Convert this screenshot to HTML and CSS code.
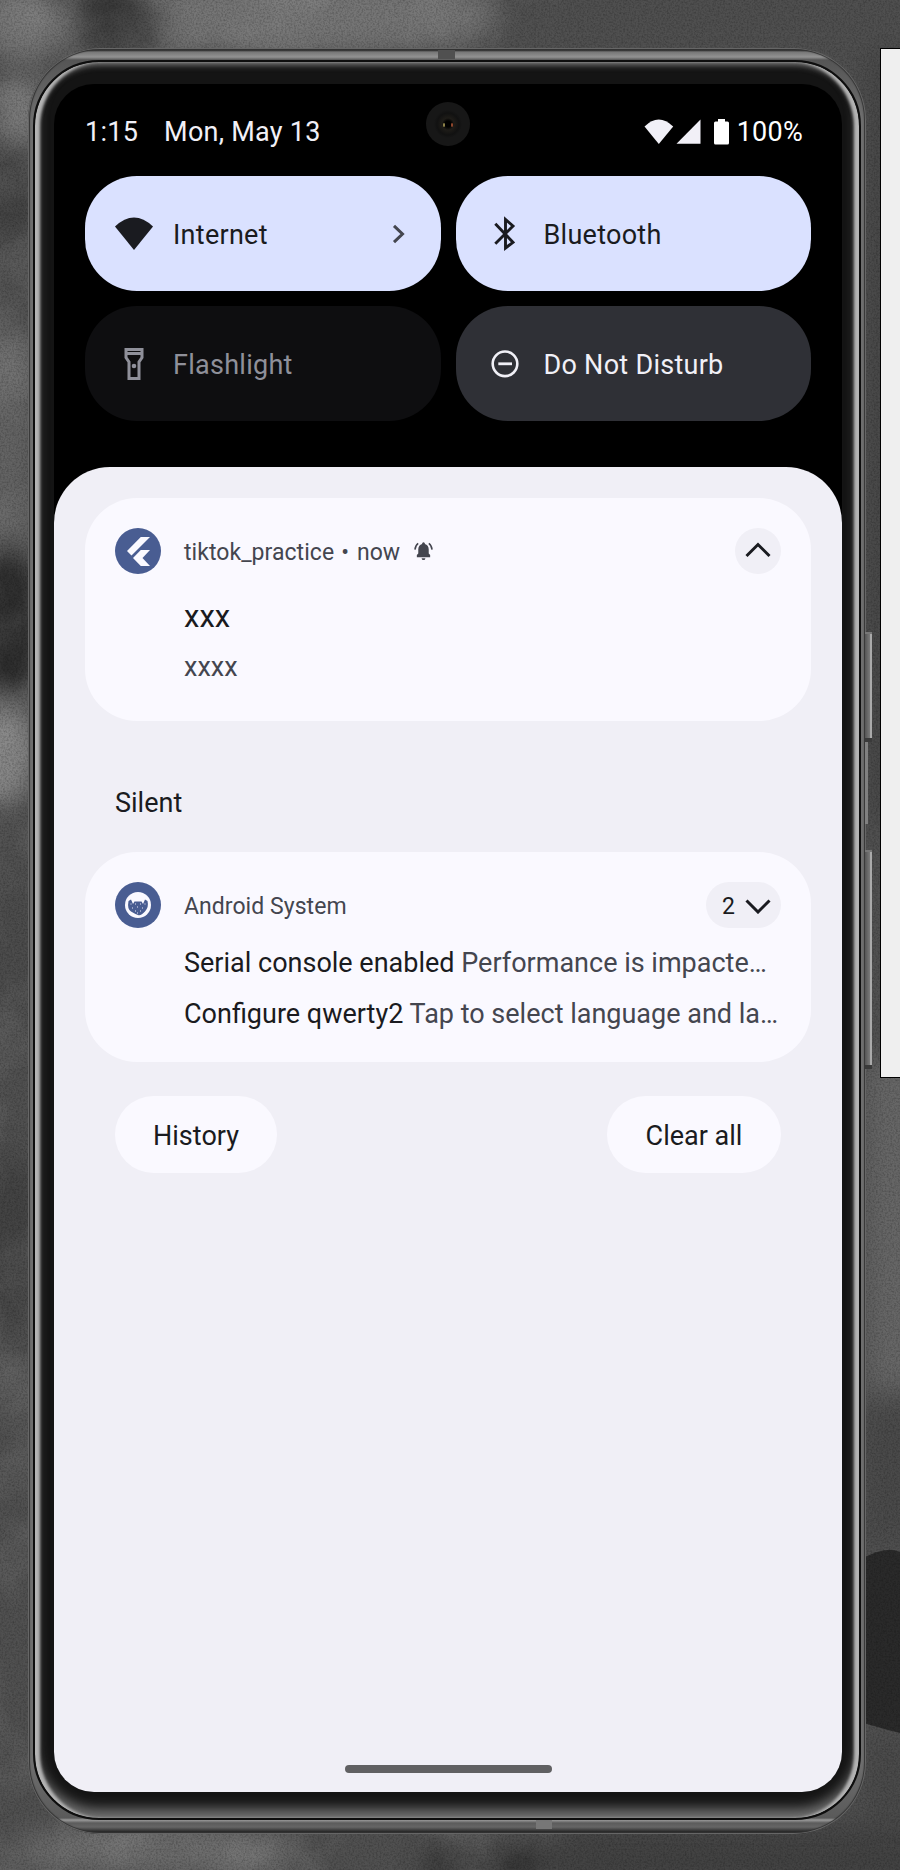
FILE: index.html
```html
<!DOCTYPE html>
<html lang="en">
<head>
<meta charset="utf-8">
<title>Notification shade</title>
<link rel="stylesheet" href="styles.css">
</head>
<body>
<div class="desktop">
  <svg class="wallpaper" viewBox="0 0 900 1870" aria-hidden="true">
    <defs>
      <filter id="soft" x="-50%" y="-50%" width="200%" height="200%"><feGaussianBlur stdDeviation="13"/></filter>
      <filter id="cloud" x="0" y="0" width="100%" height="100%"><feTurbulence type="fractalNoise" baseFrequency="0.012" numOctaves="5" seed="8"/><feColorMatrix values="0 0 0 0 0.55  0 0 0 0 0.55  0 0 0 0 0.55  1.6 0 0 0 -0.65"/></filter>
      <filter id="grain" x="0" y="0" width="100%" height="100%"><feTurbulence type="fractalNoise" baseFrequency="0.55" numOctaves="2" seed="3"/><feColorMatrix values="0 0 0 0 0  0 0 0 0 0  0 0 0 0 0  0.9 0 0 0 -0.35"/></filter>
    </defs>
    <rect width="900" height="1870" fill="#505050"/>
    <g filter="url(#soft)">
      <ellipse cx="300" cy="15" rx="200" ry="40" fill="#747474"/>
      <ellipse cx="120" cy="28" rx="45" ry="40" fill="#363636"/>
      <ellipse cx="20" cy="20" rx="40" ry="40" fill="#727272"/>
      <ellipse cx="20" cy="110" rx="30" ry="34" fill="#767676"/>
      <ellipse cx="10" cy="195" rx="28" ry="40" fill="#404040"/>
      <ellipse cx="5" cy="430" rx="30" ry="120" fill="#646464"/>
      <ellipse cx="5" cy="625" rx="34" ry="75" fill="#2c2c2c"/>
      <ellipse cx="0" cy="755" rx="34" ry="50" fill="#858585"/>
      <ellipse cx="10" cy="960" rx="30" ry="90" fill="#4c4c4c"/>
      <ellipse cx="10" cy="1240" rx="30" ry="90" fill="#424242"/>
      <ellipse cx="150" cy="1850" rx="140" ry="28" fill="#6a6a6a"/>
      <ellipse cx="490" cy="1865" rx="70" ry="22" fill="#353535"/>
      <rect x="560" y="1825" width="380" height="70" fill="#424242"/>
      <rect x="560" y="-30" width="380" height="90" fill="#4f4f4f"/>
      <rect x="865" y="50" width="60" height="770" fill="#464646"/>
      <rect x="865" y="1060" width="60" height="330" fill="#666"/>
      <rect x="865" y="1410" width="60" height="130" fill="#4a4a4a"/>
      <rect x="865" y="1740" width="60" height="80" fill="#484848"/>
    </g>
    <path d="M860 1560Q885 1545 900 1552V1733L888 1730L860 1722Z" fill="#2a2a2a"/>
    <rect width="560" height="1870" filter="url(#cloud)" opacity=".25"/>
    <rect width="900" height="1870" filter="url(#grain)" opacity=".5"/>
  </svg>
  <div class="window-edge"></div>

  <div class="phone">
    <span class="antenna antenna-top"></span>
    <span class="antenna antenna-bottom"></span>
    <span class="key key-power"></span>
    <span class="key-gap"></span>
    <span class="key key-volume"></span>
    <div class="glass">
      <main class="screen">
        <span class="camera"><i class="glint glint-a"></i><i class="glint glint-b"></i></span>
        <header class="status">
          <span class="time">1:15</span>
          <span class="date">Mon, May 13</span>
          <svg class="wifi-small" width="30" height="26" viewBox="0 0 30 26"><path d="M.5 7.500Q14.700-6.500 29.200 7.500L14.800 25Z" fill="#f1f0f7"/></svg>
          <svg class="signal" width="25" height="25" viewBox="0 0 25 25"><path d="M24.500 .5V24.700H.5Z" fill="#f1f0f7"/></svg>
          <svg class="battery" width="15" height="26" viewBox="0 0 15 26"><path d="M4 0h7v2.500h2.500q1.500 0 1.500 1.500v20q0 1.500-1.500 1.500h-12Q0 25.500 0 24V4q0-1.500 1.500-1.500H4Z" fill="#fff"/></svg>
          <span class="percent">100%</span>
        </header>

        <section class="tiles">
          <div class="tile tile-on">
            <svg class="tile-icon" width="40" height="40" viewBox="0 0 40 40"><path d="M1 12.500Q20-5.500 39 12.500L20 36Z" fill="#1a1b20"/></svg>
            <span class="tile-label">Internet</span>
            <svg class="tile-more" width="14" height="20" viewBox="0 0 14 20"><path d="M2 1.800L10.500 10L2 18.200" fill="none" stroke="#44464f" stroke-width="3"/></svg>
          </div>
          <div class="tile tile-on">
            <svg class="tile-icon" width="40" height="40" viewBox="0 0 40 40"><path d="M10.300 9.800L28 28.300L20.500 34V5.500L28 12L10.300 29.700" fill="none" stroke="#1a1b20" stroke-width="2.900"/></svg>
            <span class="tile-label">Bluetooth</span>
          </div>
          <div class="tile tile-disabled">
            <svg class="tile-icon" width="40" height="40" viewBox="0 0 40 40"><path d="M12 5.500H28V13.500L25 18V34.500H15V18L12 13.500ZM12 9.500H28" fill="none" stroke="#8f909a" stroke-width="3"/><circle cx="20" cy="22" r="2.300" fill="#8f909a"/></svg>
            <span class="tile-label">Flashlight</span>
          </div>
          <div class="tile tile-off">
            <svg class="tile-icon" width="40" height="40" viewBox="0 0 40 40"><circle cx="20" cy="19.800" r="12.300" fill="none" stroke="#f1f0f7" stroke-width="2.600"/><path d="M13.300 19.800H27" stroke="#f1f0f7" stroke-width="2.800"/></svg>
            <span class="tile-label">Do Not Disturb</span>
          </div>
        </section>

        <section class="shade">
          <article class="card card-alert">
            <div class="card-head">
              <svg class="app-icon" width="46" height="46" viewBox="0 0 46 46"><circle cx="23" cy="23" r="23" fill="#495d92"/><path d="M25.800 9H35L16.500 27.500L12 23ZM25.800 22H35L27.500 30L35 38H25.800L18 30Z" fill="#faf9ff"/></svg>
              <span class="app-name">tiktok_practice<span class="dot">•</span>now</span>
              <svg class="bell" width="19" height="19" viewBox="0 0 20 20"><path d="M3 14.800V13.800L4.500 12.200V7.500Q4.800 3.300 8.500 2.200V1.500Q10-.8 11.500 1.500V2.200Q15.200 3.300 15.500 7.500V12.200L17 13.800V16H3ZM8 17H12Q12 19 10 19T8 17Z" fill="#44464f"/><path d="M4.400 1.500Q1.300 3.800 1 8M15.600 1.500Q18.700 3.800 19 8" fill="none" stroke="#44464f" stroke-width="1.600"/></svg>
              <span class="toggle toggle-round"><svg width="28" height="18" viewBox="0 0 28 18"><path d="M2.500 14L14 2.500L25.500 14" fill="none" stroke="#1a1b20" stroke-width="3"/></svg></span>
            </div>
            <h2 class="alert-title">xxx</h2>
            <p class="alert-text">xxxx</p>
          </article>

          <h3 class="section-title">Silent</h3>

          <article class="card card-system">
            <div class="card-head">
              <svg class="app-icon" width="46" height="46" viewBox="0 0 46 46"><circle cx="23" cy="23" r="23" fill="#495d92"/><circle cx="23" cy="23" r="13" fill="#faf9ff"/><path d="M13.500 19L16 17.500L18 22L19.500 19.500H26.500L28 22L30 17.500L32.500 19Q34 25 30 29.500T23 33T16 29.500T13.500 19Z" fill="#495d92"/><path d="M15.500 22h1M20 22h1M25 22h1M29.500 22h1M17 26h1M22 25h1M27 26h1M20 29h1M25 29h1M22 31h1" stroke="#e5e6f5" stroke-width="1.100"/></svg>
              <span class="app-name">Android System</span>
              <span class="toggle toggle-count"><span class="count">2</span><svg width="28" height="18" viewBox="0 0 28 18"><path d="M2.500 4.500L14 16L25.500 4.500" fill="none" stroke="#1a1b20" stroke-width="3"/></svg></span>
            </div>
            <p class="line"><span class="line-title">Serial console enabled</span> Performance is impacte…</p>
            <p class="line"><span class="line-title">Configure qwerty2</span> Tap to select language and la…</p>
          </article>

          <div class="actions">
            <button class="pill pill-history">History</button>
            <button class="pill pill-clear">Clear all</button>
          </div>
          <div class="home-bar"></div>
        </section>
      </main>
    </div>
  </div>
</div>
</body>
</html>
```
FILE: styles.css
```css
* { box-sizing: border-box; }
body { margin: 0; font-family: Roboto, "Noto Sans", sans-serif; font-size: 27px; color: #1a1b20; }
h2, h3, p { margin: 0; font-weight: 400; }
svg { display: block; flex: none; }

.desktop { position: relative; width: 900px; height: 1870px; padding: 48px 0 0 28px; overflow: hidden; background: #4b4b4b; }
.wallpaper { position: absolute; inset: 0; width: 900px; height: 1870px; }
.window-edge { position: absolute; left: 880px; top: 48px; width: 24px; height: 1030px; background: #efefef; border: 1px solid #000; }

/* Phone body: metal rim, dark seam, polished glass edge */
.phone {
  position: relative; width: 838px; height: 1786px; padding: 12px 5px 14px;
  border-radius: 72px;
  background: linear-gradient(#484848 0, #252525 2px, #777 4px, #929292 9px, #555 12px, #6e6e6e 70px, #6e6e6e 1715px, #5a5a5a 1770px, #999 1772px, #5c5c5c 1775px, #666 1779px, #171717 1785px);
  box-shadow: inset 0 0 0 1px #666, inset 0 0 1px 2px #333;
}
.glass {
  height: 1760px; padding: 22px 19px 28px; border: 2px solid #0e0e0e; border-radius: 66px;
  background: #141414;
  box-shadow: inset 6px 0 3px -1px #b4b4b4, inset -6px 0 3px -1px #b4b4b4, inset 0 3px 6px #777, inset 0 -9px 13px #777;
}
.antenna { position: absolute; background: #505050; }
.antenna-top { left: 410px; top: 2px; width: 17px; height: 9px; }
.antenna-bottom { left: 508px; bottom: 5px; width: 16px; height: 9px; background: #777; }
.key { position: absolute; left: 837px; width: 7px; background: linear-gradient(90deg, #555, #777 65%, #aaa 75%); border-top: 2px solid #777; border-bottom: 4px solid #3a3a3a; }
.key-power { top: 584px; height: 110px; }
.key-volume { top: 802px; height: 219px; }
.key-gap { position: absolute; left: 837px; top: 694px; width: 3px; height: 82px; background: #808080; }

.screen { position: relative; display: flex; flex-direction: column; width: 788px; height: 1708px; border-radius: 40px; background: #000; overflow: hidden; }
.camera { position: absolute; left: 372px; top: 18px; width: 44px; height: 44px; border-radius: 50%; background: radial-gradient(circle, #000 0 3px, #1e1c18 6px, #111 11px, #171717 14px); }
.glint { position: absolute; top: 21px; width: 2px; height: 4px; border-radius: 50%; }
.glint-a { left: 17px; background: #998d50; }
.glint-b { left: 25px; background: #9c4c30; }

.status { display: flex; align-items: center; height: 92px; padding: 3px 39px 0 31px; color: #f1f0f7; letter-spacing: .25px; }
.date { margin-left: 26px; }
.wifi-small { margin-left: auto; }
.signal { margin-left: 2px; }
.battery { margin-left: 13px; }
.percent { margin-left: 8px; color: #fff; }

.tiles { display: grid; grid-template-columns: 1fr 1fr; gap: 15px; padding: 0 31px; }
.tile { display: flex; align-items: center; height: 115px; padding: 0 35px 0 29px; border-radius: 52px; letter-spacing: .27px; }
.tile-label { margin-left: 19px; padding-top: 2px; }
.tile-more { margin-left: auto; }
.tile-on { background: #dae1ff; }
.tile-off { background: #2f3036; color: #f1f0f7; }
.tile-disabled { background: #0e0e10; color: #8f909a; }

.shade { flex: 1; display: flex; flex-direction: column; margin-top: 46px; padding: 31px 31px 19px; border-radius: 56px 56px 0 0; background: #f0eff6; }
.card { padding: 30px; border-radius: 52px; background: #faf9ff; }
.card-alert { height: 223px; }
.card-head { display: flex; align-items: center; height: 46px; font-size: 23px; color: #44464f; letter-spacing: .05px; }
.app-name { margin-left: 23px; padding-top: 2px; }
.dot { margin: 0 8px 0 7px; }
.bell { margin-left: 14px; }
.toggle { display: flex; align-items: center; justify-content: flex-end; height: 46px; margin-left: auto; padding-right: 9px; border-radius: 23px; background: #f0eff6; color: #1a1b20; }
.toggle-round { width: 46px; }
.toggle-count { width: 75px; }
.count { margin-right: 9px; padding-top: 2px; }
.alert-title { margin: 25px 0 0 69px; font-size: 31px; line-height: 36px; }
.alert-text { margin: 15px 0 0 69px; line-height: 34px; color: #44464f; }
.section-title { margin: 65px 0 31px 30px; font-size: 27px; line-height: 35px; }
.card-system { height: 210px; }
.line { height: 51px; margin-left: 69px; line-height: 51px; color: #44464f; white-space: nowrap; }
.card-head + .line { margin-top: 10px; }
.line-title { color: #1a1b20; }
.actions { display: flex; justify-content: space-between; margin-top: 34px; padding: 0 30px; }
.pill { height: 77px; padding: 2px 0 0; border: 0; border-radius: 38.5px; background: #faf9ff; color: #1a1b20; font: inherit; }
.pill-history { width: 162px; }
.pill-clear { width: 174px; }
.home-bar { width: 207px; height: 8px; margin: auto auto 0; border-radius: 4px; background: #606062; }
```
